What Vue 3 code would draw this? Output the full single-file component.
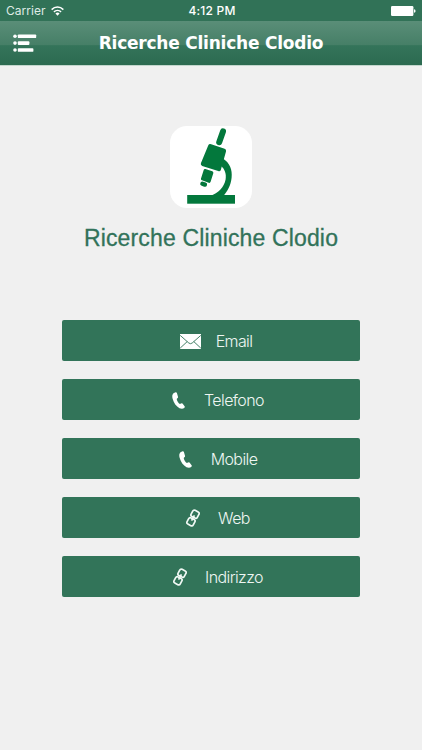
<template>
  <div class="screen">
    <header class="header">
      <div class="status-bar">
        <div class="carrier">
          <span>Carrier</span>
          <svg class="wifi" viewBox="0 0 12 9" width="13" height="10">
            <path d="M.6 3.2C3.7.1 8.3.1 11.4 3.2" />
            <path d="M2.7 5.3C4.6 3.5 7.4 3.5 9.3 5.3" />
            <path class="dot" d="M4.1 6.7Q6 5.2 7.9 6.7L6 8.8Z" />
          </svg>
        </div>
        <span class="clock">4:12 PM</span>
        <svg class="battery" viewBox="0 0 25 10" width="25" height="10">
          <rect x="0" y="0" width="22.4" height="10" rx="1.2" />
          <path d="M23 3.2q1.6.3 1.6 1.8T23 6.8z" />
        </svg>
      </div>
      <div class="nav-bar">
        <button class="menu-button" aria-label="Menu">
          <svg viewBox="0 0 24 19" width="24" height="19">
            <circle cx="2" cy="2.2" r="1.8" />
            <circle cx="2" cy="9.1" r="1.8" />
            <circle cx="2" cy="16" r="1.8" />
            <rect x="4.8" y=".4" width="18.4" height="3.7" rx=".9" />
            <rect x="4.8" y="7.3" width="11.6" height="3.6" rx=".9" />
            <rect x="4.8" y="14.2" width="15.6" height="3.6" rx=".9" />
          </svg>
        </button>
        <h1 class="nav-title">Ricerche Cliniche Clodio</h1>
      </div>
    </header>

    <main class="content">
      <div class="logo">
        <svg viewBox="0 0 82 82" width="82" height="82">
          <!-- eyepiece -->
          <path d="M53 5.4L49.2 16.2" stroke="#03783c" stroke-width="6" stroke-linecap="round" />
          <!-- tube -->
          <path
            d="M41.2 18.2L54.6 22.7Q56.6 23.4 56 25.4L50.8 43.9Q50.2 45.8 48.2 45.1L32.2 39.9Q30.3 39.2 30.9 37.3L38.2 19.5Q39 17.5 41.2 18.2z"
          />
          <path d="M35.4 43L42.3 45.3Q43.7 45.8 43.3 47.2L40.6 55.8Q40.1 57.3 38.7 56.8L32 54.3Q30.6 53.8 31 52.4L33.7 43.9Q34.1 42.6 35.4 43z" />
          <path d="M32.4 57.7L34.9 58.6" stroke="#03783c" stroke-width="4.4" stroke-linecap="round" />
          <!-- arm -->
          <path d="M53.3 32.8C59.6 37 62.6 43.8 61.6 51.8C60.8 59.4 57.4 65.4 53.3 70H40C48.6 67 54.2 61.2 55.6 53.6C56.6 47.4 54.8 43 50.6 39.4z" />
          <rect x="17.2" y="69" width="47.8" height="8.7" />
        </svg>
      </div>
      <h2 class="company">Ricerche Cliniche Clodio</h2>

      <nav class="actions">
        <button v-for="action in actions" :key="action.label" class="action">
          <span class="icon">
            <svg v-if="action.icon === 'mail'" viewBox="0 0 21 15" width="21" height="15">
              <rect width="21" height="15" fill="#fff" />
              <path
                d="M.2 1.4L8.8 9Q10.5 10.4 12.2 9L20.8 1.4M.2 14.1L7.2 7.6M20.8 14.1L13.8 7.6"
                fill="none"
                stroke="#327459"
                stroke-width=".9"
              />
            </svg>
            <svg v-else-if="action.icon === 'phone'" viewBox="0 0 13 17" width="13" height="17">
              <path
                d="M3.6.3L2 1.1C.2 2.1-.1 4.5.7 7.1C1.7 10.9 4.3 14.7 7.5 16.2C9.4 17 11.3 16.8 12.4 15.8Q13.1 15 12.6 14.2L10.5 11.6Q9.8 10.9 9 11.4L7.9 12C6.5 11.1 5 8.8 4.7 6.9L5.6 6.1Q6.2 5.6 6 4.8L4.9 1.1Q4.5 0 3.6.3z"
                fill="#fff"
              />
            </svg>
            <svg v-else viewBox="0 0 14 18" width="14" height="18">
              <g fill="none" stroke="#f0f8f4" stroke-width="1.7" transform="rotate(28 7 9)">
                <rect x="3.5" y="1.2" width="7" height="7" rx="1.8" />
                <rect x="3.5" y="9.8" width="7" height="7" rx="1.8" />
                <path d="M7 6V12" />
              </g>
            </svg>
          </span>
          <span class="label">{{ action.label }}</span>
        </button>
      </nav>
    </main>
  </div>
</template>

<script setup>
const actions = [
  { label: 'Email', icon: 'mail' },
  { label: 'Telefono', icon: 'phone' },
  { label: 'Mobile', icon: 'phone' },
  { label: 'Web', icon: 'link' },
  { label: 'Indirizzo', icon: 'link' }
]
</script>

<style>
body {
  margin: 0;
  background: #f0f0f0;
}
</style>

<style scoped>
.screen {
  min-height: 750px;
  background: #f0f0f0;
  font-family: "Liberation Sans", Arial, sans-serif;
}

button {
  padding: 0;
  border: 0;
  background: none;
  font: inherit;
}

.header {
  height: 65px;
  background: #317257;
  border-bottom: 1px solid #c3d6cd;
  color: #fff;
}

.status-bar {
  display: grid;
  grid-template-columns: 1fr auto 1fr;
  align-items: center;
  box-sizing: border-box;
  height: 21px;
  padding: 1px 6px 0 6px;
  font-family: Inter, sans-serif;
  font-size: 12px;
  line-height: 20px;
}

.carrier {
  display: flex;
  align-items: center;
  gap: 5px;
  color: #dfebe5;
  letter-spacing: 0.05px;
}

.wifi {
  fill: none;
  stroke: #fff;
  stroke-width: 1.4;
}

.wifi .dot {
  fill: #fff;
  stroke: none;
}

.clock {
  padding-left: 2px;
  font-weight: 500;
  letter-spacing: 0.2px;
}

.battery {
  justify-self: end;
  fill: #fff;
}

.nav-bar {
  display: grid;
  grid-template-columns: 50px 1fr 50px;
  align-items: center;
  height: 44px;
  background: linear-gradient(#5a8e78 0%, #467f67 54%, #34745a 56%, #2c6a50 100%);
}

.menu-button {
  display: flex;
  padding-left: 13px;
}

.menu-button svg {
  fill: #fff;
}

.nav-title {
  margin: 0;
  padding-top: 1px;
  text-align: center;
  font-family: "DejaVu Sans", sans-serif;
  font-size: 17px;
  font-weight: 700;
  line-height: 43px;
  letter-spacing: -0.22px;
  white-space: nowrap;
}

.content {
  display: flex;
  flex-direction: column;
  align-items: center;
  padding-top: 60px;
}

.logo {
  width: 82px;
  height: 82px;
  border-radius: 17px;
  background: #fff;
  overflow: hidden;
}

.logo svg {
  display: block;
  fill: #03783c;
}

.company {
  margin: 15px 0 0;
  color: #32735a;
  font-size: 23px;
  font-weight: 400;
  line-height: 30px;
  letter-spacing: 0.15px;
  white-space: nowrap;
  -webkit-text-stroke: 0.3px #32735a;
}

.actions {
  display: flex;
  flex-direction: column;
  gap: 18.1px;
  width: 298px;
  margin-top: 67px;
}

.action {
  display: flex;
  align-items: center;
  justify-content: center;
  gap: 15px;
  box-sizing: border-box;
  height: 41px;
  padding: 1px 0 0 10px;
  border-radius: 2px;
  background: #327459;
  color: #eef6f2;
}

.icon {
  display: flex;
  justify-content: center;
  width: 21px;
}

.label {
  font-family: Inter, sans-serif;
  font-size: 16px;
  font-weight: 300;
  letter-spacing: -0.6px;
}
</style>
